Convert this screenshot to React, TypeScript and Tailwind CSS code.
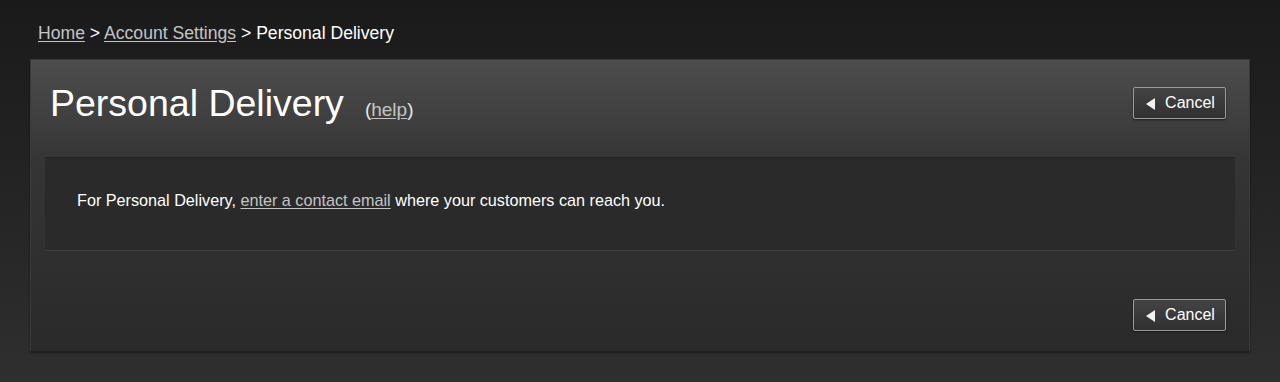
import React from 'react'

function CancelButton() {
  return (
    <button className="flex h-[32px] w-[93px] items-center justify-center gap-[10px] rounded-[2px] border border-[#9a9a9a] bg-gradient-to-b from-[#444] to-[#303030] pl-[2px] text-[16px] text-white shadow-[0_1px_2px_rgba(0,0,0,0.5)]">
      <svg width="9" height="12" viewBox="0 0 9 12" className="mt-[1px]">
        <polygon points="9,0 9,12 0,6" fill="#f2f2f2" />
      </svg>
      <span>Cancel</span>
    </button>
  )
}

export default function App() {
  return (
    <div
      className="h-[382px] w-full bg-gradient-to-b from-[#1a1a1a] to-[#2f2f2f] px-[30px] pt-[22px]"
      style={{ fontFamily: '"Liberation Sans", Arial, sans-serif' }}
    >
      {/* breadcrumb */}
      <div className="pl-[8px] text-[17.6px] leading-[22px] text-white">
        <a href="#" className="text-[#c4c4c4] underline underline-offset-2">Home</a>
        {' > '}
        <a href="#" className="text-[#c4c4c4] underline underline-offset-2">Account Settings</a>
        {' > '}
        <span>Personal Delivery</span>
      </div>

      <div className="mt-[15px] h-[293px] border border-[#3a3a3a] border-b-[#1f1f1f] bg-gradient-to-b from-[#4d4d4d] via-[#353535] via-35% to-[#2a2a2a] shadow-[0_1px_2px_rgba(0,0,0,0.4)]">
        <div className="flex h-[63px] items-end justify-between pl-[19px] pr-[23px]">
          <div className="flex h-[40px] items-baseline">
            <h1 className="text-[37.5px] leading-[40px] text-white">Personal Delivery</h1>
            <span className="ml-[21px] text-[19px] text-[#e8e8e8]">
              (<a href="#" className="text-[#c4c4c4] underline underline-offset-2">help</a>)
            </span>
          </div>
          <div className="pb-[4px]">
            <CancelButton />
          </div>
        </div>

        <div className="mx-[14px] mt-[34px] flex h-[94px] items-center border-t border-t-[#252525] border-b border-b-[#3e3e3e] bg-[#2a2a2a] pl-[32px] pb-[7px]">
          <p className="text-[16.2px] text-white">
            For Personal Delivery,{' '}
            <a href="#" className="text-[#c4c4c4] underline underline-offset-2">enter a contact email</a>{' '}
            where your customers can reach you.
          </p>
        </div>

        <div className="flex justify-end pr-[23px] pt-[48px]">
          <CancelButton />
        </div>
      </div>
    </div>
  )
}
